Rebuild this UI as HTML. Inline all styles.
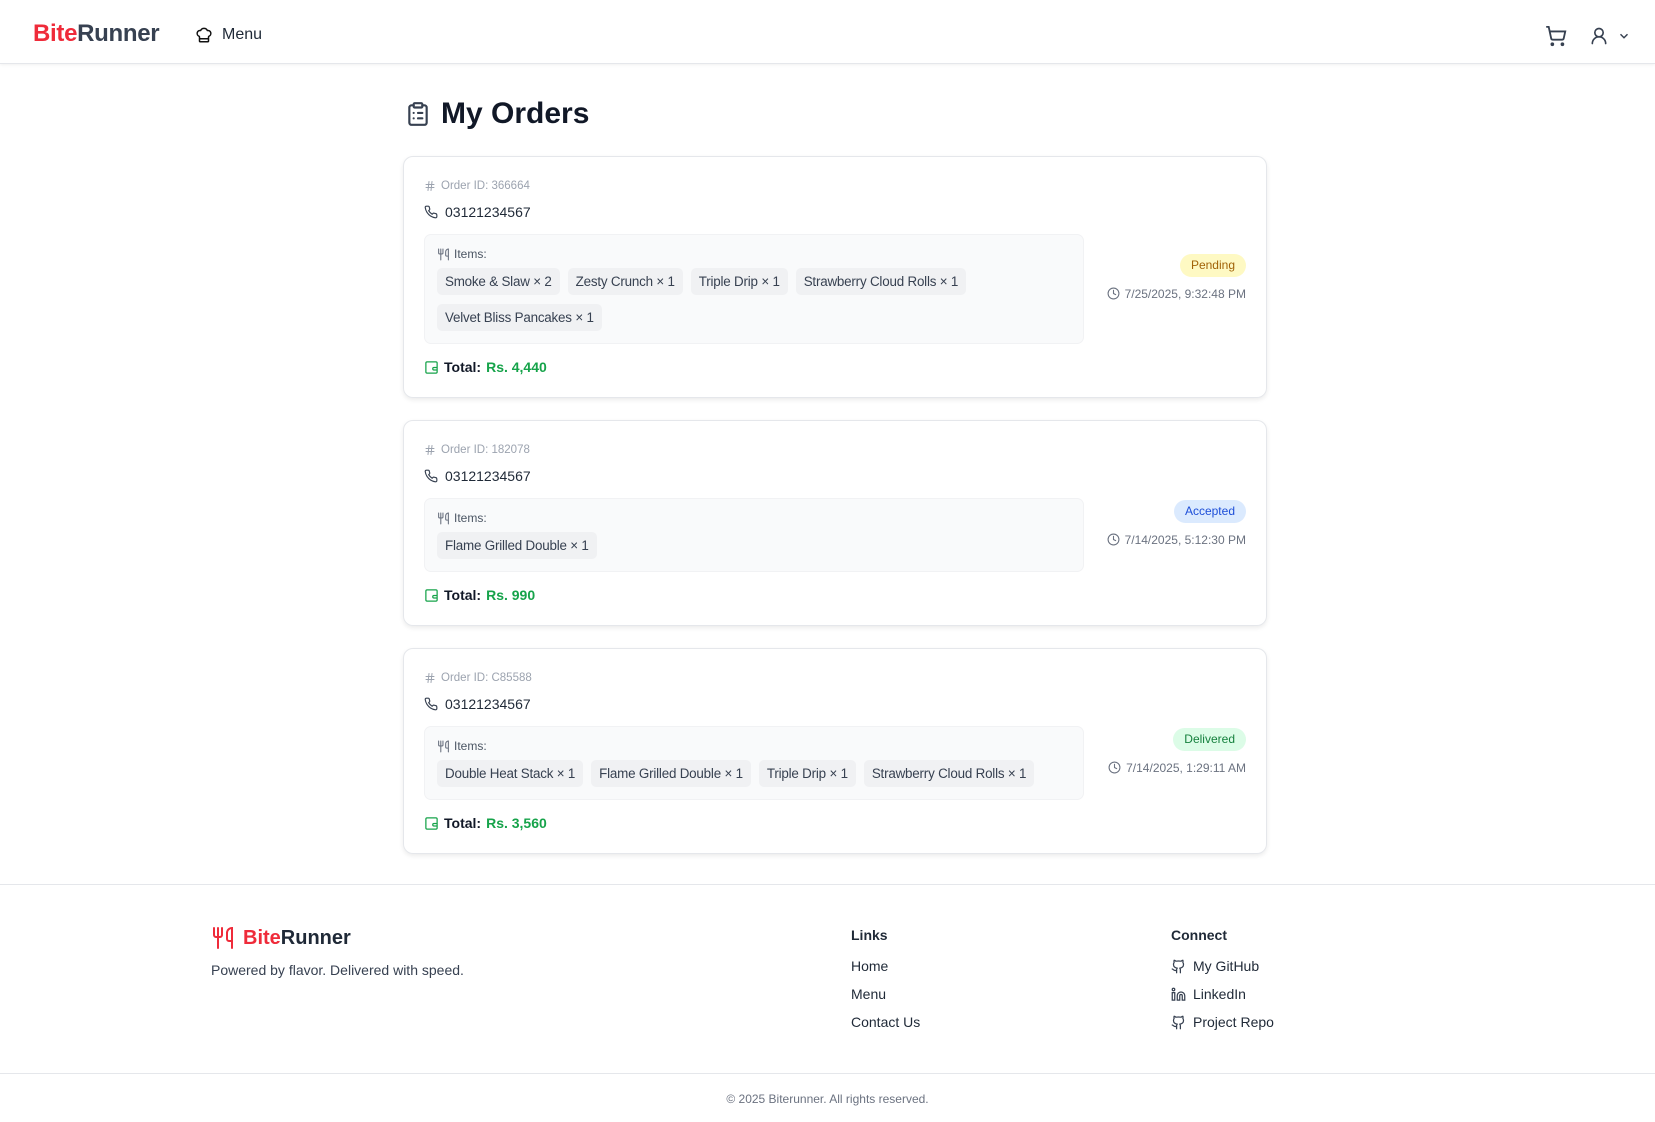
<!DOCTYPE html>
<html><head><meta charset="utf-8"><style>
*{box-sizing:border-box;margin:0;padding:0}
body{width:1655px;height:1122px;overflow:hidden;background:#fff;font-family:"Liberation Sans",sans-serif;color:#111827;position:relative}
.hdr{height:64px;border-bottom:1px solid #e5e7eb;box-shadow:0 1px 3px rgba(0,0,0,.06);position:relative}
.logo{position:absolute;left:33px;top:20px;font-size:24px;font-weight:bold;letter-spacing:-0.3px}
.logo .r{color:#ef2b3a}.logo .d{color:#374151}
.menu{position:absolute;left:195px;top:26px;font-size:16px;color:#1f2937;display:flex;align-items:center;gap:9px}
.hicons{position:absolute;right:24px;top:25px;display:flex;gap:22px;align-items:center}
.title{position:absolute;left:405px;top:97px;display:flex;align-items:center;gap:10px;font-size:30px;font-weight:bold;color:#111827}
.card{position:absolute;left:403px;width:864px;border:1px solid #e5e7eb;border-radius:10px;box-shadow:0 2px 5px rgba(0,0,0,.08);padding:20px;display:flex;align-items:center}
.left{width:660px}
.oid{height:18px;font-size:11.5px;color:#9ca3af;display:flex;align-items:center;gap:5px}
.ph{margin-top:6px;height:22px;font-size:14px;color:#1f2937;display:flex;align-items:center;gap:7px}
.box{margin-top:11px;background:#f9fafb;border:1px solid #f1f2f4;border-radius:7px;padding:11px 12px 12px}
.il{height:16px;font-size:12px;color:#4b5563;display:flex;align-items:center;gap:4px}
.chips{display:flex;flex-wrap:wrap;gap:9px 8px;margin-top:6px}
.chip{background:#f0f1f3;border-radius:5px;height:27px;line-height:27px;padding:0 8px;font-size:13.4px;letter-spacing:-0.2px;color:#374151}
.tot{margin-top:13px;height:20px;font-size:14px;font-weight:bold;display:flex;align-items:center;gap:5px}
.tot .g{color:#16a34a}
.right{flex:1;display:flex;flex-direction:column;align-items:flex-end;gap:10px}
.badge{font-size:12px;padding:0 11px;height:23px;line-height:23px;border-radius:12px}
.dt{font-size:12px;color:#6b7280;display:flex;align-items:center;gap:5px}
.f{position:absolute;font-size:14px;color:#1f2937;display:flex;align-items:center;gap:7px}
</style></head><body>
<div class="hdr">
<div class="logo"><span class="r">Bite</span><span class="d">Runner</span></div>
<div class="menu"><svg width="18" height="18" viewBox="0 0 24 24" fill="none" stroke="#111" stroke-width="2" stroke-linejoin="round"><path d="M17 21a1 1 0 0 0 1-1v-5.35c0-.46.31-.85.74-1.03A4 4 0 0 0 16.53 6a5 5 0 0 0-9.06 0A4 4 0 0 0 5.26 13.620c.43.18.74.57.74 1.030V20a1 1 0 0 0 1 1Z"/><path d="M6 17h12"/></svg>Menu</div>
<div class="hicons">
<svg width="22" height="22" viewBox="0 0 24 24" fill="none" stroke="#374151" stroke-width="2" stroke-linecap="round"><circle cx="8" cy="21" r="1"/><circle cx="19" cy="21" r="1"/><path d="M2.05 2.05h2l2.66 12.42a2 2 0 0 0 2 1.58h9.78a2 2 0 0 0 1.95-1.57l1.65-7.43H5.12"/></svg>
<span style="display:flex;gap:8px;align-items:center"><svg width="20" height="20" viewBox="0 0 24 24" fill="none" stroke="#374151" stroke-width="2" stroke-linecap="round"><circle cx="12" cy="8" r="5"/><path d="M20 21a8 8 0 0 0-16 0"/></svg><svg width="14" height="14" viewBox="0 0 24 24" fill="none" stroke="#374151" stroke-width="2.5"><path d="m6 9 6 6 6-6"/></svg></span>
</div>
</div>
<div class="title"><svg width="26" height="30" viewBox="0 0 24 24" fill="none" stroke="#374151" stroke-width="2" stroke-linecap="round"><rect x="8" y="2" width="8" height="4" rx="1"/><path d="M16 4h2a2 2 0 0 1 2 2v14a2 2 0 0 1-2 2H6a2 2 0 0 1-2-2V6a2 2 0 0 1 2-2h2"/><path d="M12 11h4M12 16h4M8 11h.01M8 16h.01"/></svg>My Orders</div>

<svg width="0" height="0" style="position:absolute"><defs>
<symbol id="ph" viewBox="0 0 24 24"><path fill="none" stroke="#374151" stroke-width="2" stroke-linejoin="round" d="M22 16.9v3a2 2 0 0 1-2.2 2 19.8 19.8 0 0 1-8.6-3.1 19.5 19.5 0 0 1-6-6A19.8 19.8 0 0 1 2.1 4.2 2 2 0 0 1 4.1 2h3a2 2 0 0 1 2 1.7c.1.9.4 1.8.7 2.7a2 2 0 0 1-.5 2.1L8 9.8a16 16 0 0 0 6 6l1.3-1.3a2 2 0 0 1 2.1-.4c.9.3 1.8.6 2.7.7a2 2 0 0 1 1.7 2Z"/></symbol>
<symbol id="fk" viewBox="0 0 24 24"><path fill="none" stroke="#6b7280" stroke-width="2" stroke-linecap="round" d="M3 2v7c0 1.1.9 2 2 2h4a2 2 0 0 0 2-2V2M7 2v20M21 15V2a5 5 0 0 0-5 5v6c0 1.1.9 2 2 2h3Zm0 0v7"/></symbol>
<symbol id="hs" viewBox="0 0 24 24"><path fill="none" stroke="#9ca3af" stroke-width="2" stroke-linecap="round" d="M4 9h16M4 15h16M10 3 8 21M16 3l-2 18"/></symbol>
<symbol id="ck" viewBox="0 0 24 24"><g fill="none" stroke="#6b7280" stroke-width="2" stroke-linecap="round"><circle cx="12" cy="12" r="10"/><path d="M12 6v6l4 2"/></g></symbol>
<symbol id="wl" viewBox="0 0 24 24"><g fill="none" stroke="#16a34a" stroke-width="2"><rect x="3" y="3" width="18" height="18" rx="2"/><path d="M21 12h-5a1 1 0 0 0 0 4h5"/></g></symbol>
<symbol id="gh" viewBox="0 0 24 24"><path fill="none" stroke="#374151" stroke-width="2" stroke-linecap="round" stroke-linejoin="round" d="M15 22v-4a4.8 4.8 0 0 0-1-3.5c3 0 6-2 6-5.5.08-1.25-.27-2.48-1-3.5.28-1.15.28-2.35 0-3.5 0 0-1 0-3 1.5-2.64-.5-5.36-.5-8 0C6 2 5 2 5 2c-.3 1.15-.3 2.35 0 3.5A5.4 5.4 0 0 0 4 9c0 3.5 3 5.5 6 5.5-.39.49-.68 1.05-.85 1.65-.17.6-.22 1.23-.15 1.85v4M9 18c-4.51 2-5-2-7-2"/></symbol>
<symbol id="li" viewBox="0 0 24 24"><path fill="none" stroke="#374151" stroke-width="2" d="M16 8a6 6 0 0 1 6 6v7h-4v-7a2 2 0 0 0-4 0v7h-4v-7a6 6 0 0 1 6-6zM2 9h4v12H2z"/><circle cx="4" cy="4" r="2" fill="none" stroke="#374151" stroke-width="2"/></symbol>
</defs></svg>

<div class="card" style="top:156px">
<div class="left">
<div class="oid"><svg width="12" height="12"><use href="#hs"/></svg>Order ID: 366664</div>
<div class="ph"><svg width="14" height="14"><use href="#ph"/></svg><span>03121234567</span></div>
<div class="box"><div class="il"><svg width="13" height="13"><use href="#fk"/></svg> Items:</div>
<div class="chips"><span class="chip">Smoke &amp; Slaw × 2</span><span class="chip">Zesty Crunch × 1</span><span class="chip">Triple Drip × 1</span><span class="chip">Strawberry Cloud Rolls × 1</span><span class="chip">Velvet Bliss Pancakes × 1</span></div></div>
<div class="tot"><svg width="15" height="15"><use href="#wl"/></svg>Total: <span class="g">Rs. 4,440</span></div>
</div>
<div class="right"><span class="badge" style="background:#fef9c3;color:#a16207">Pending</span><span class="dt"><svg width="13" height="13"><use href="#ck"/></svg>7/25/2025, 9:32:48 PM</span></div>
</div>

<div class="card" style="top:420px">
<div class="left">
<div class="oid"><svg width="12" height="12"><use href="#hs"/></svg>Order ID: 182078</div>
<div class="ph"><svg width="14" height="14"><use href="#ph"/></svg><span>03121234567</span></div>
<div class="box"><div class="il"><svg width="13" height="13"><use href="#fk"/></svg> Items:</div>
<div class="chips"><span class="chip">Flame Grilled Double × 1</span></div></div>
<div class="tot"><svg width="15" height="15"><use href="#wl"/></svg>Total: <span class="g">Rs. 990</span></div>
</div>
<div class="right"><span class="badge" style="background:#dbeafe;color:#1d4ed8">Accepted</span><span class="dt"><svg width="13" height="13"><use href="#ck"/></svg>7/14/2025, 5:12:30 PM</span></div>
</div>

<div class="card" style="top:648px">
<div class="left">
<div class="oid"><svg width="12" height="12"><use href="#hs"/></svg>Order ID: C85588</div>
<div class="ph"><svg width="14" height="14"><use href="#ph"/></svg><span>03121234567</span></div>
<div class="box"><div class="il"><svg width="13" height="13"><use href="#fk"/></svg> Items:</div>
<div class="chips"><span class="chip">Double Heat Stack × 1</span><span class="chip">Flame Grilled Double × 1</span><span class="chip">Triple Drip × 1</span><span class="chip">Strawberry Cloud Rolls × 1</span></div></div>
<div class="tot"><svg width="15" height="15"><use href="#wl"/></svg>Total: <span class="g">Rs. 3,560</span></div>
</div>
<div class="right"><span class="badge" style="background:#dcfce7;color:#15803d">Delivered</span><span class="dt"><svg width="13" height="13"><use href="#ck"/></svg>7/14/2025, 1:29:11 AM</span></div>
</div>

<div style="position:absolute;left:0;right:0;top:884px;border-top:1px solid #e5e7eb"></div>
<div class="f" style="left:211px;top:926px;font-size:20px;font-weight:bold;gap:8px"><svg width="24" height="24" viewBox="0 0 24 24" fill="none" stroke="#ef2b3a" stroke-width="2" stroke-linecap="round"><path d="M3 2v7c0 1.1.9 2 2 2h4a2 2 0 0 0 2-2V2M7 2v20M21 15V2a5 5 0 0 0-5 5v6c0 1.1.9 2 2 2h3Zm0 0v7"/></svg><span><span style="color:#ef2b3a">Bite</span><span style="color:#1f2937">Runner</span></span></div>
<div class="f" style="left:211px;top:962px;color:#374151">Powered by flavor. Delivered with speed.</div>
<div class="f" style="left:851px;top:927px;font-weight:bold">Links</div>
<div class="f" style="left:851px;top:958px">Home</div>
<div class="f" style="left:851px;top:986px">Menu</div>
<div class="f" style="left:851px;top:1014px">Contact Us</div>
<div class="f" style="left:1171px;top:927px;font-weight:bold">Connect</div>
<div class="f" style="left:1171px;top:958px"><svg width="15" height="15"><use href="#gh"/></svg>My GitHub</div>
<div class="f" style="left:1171px;top:986px"><svg width="15" height="15"><use href="#li"/></svg>LinkedIn</div>
<div class="f" style="left:1171px;top:1014px"><svg width="15" height="15"><use href="#gh"/></svg>Project Repo</div>
<div style="position:absolute;left:0;right:0;top:1073px;border-top:1px solid #e5e7eb"></div>
<div class="f" style="left:0;right:0;top:1092px;justify-content:center;font-size:12px;color:#6b7280">© 2025 Biterunner. All rights reserved.</div>
</body></html>
